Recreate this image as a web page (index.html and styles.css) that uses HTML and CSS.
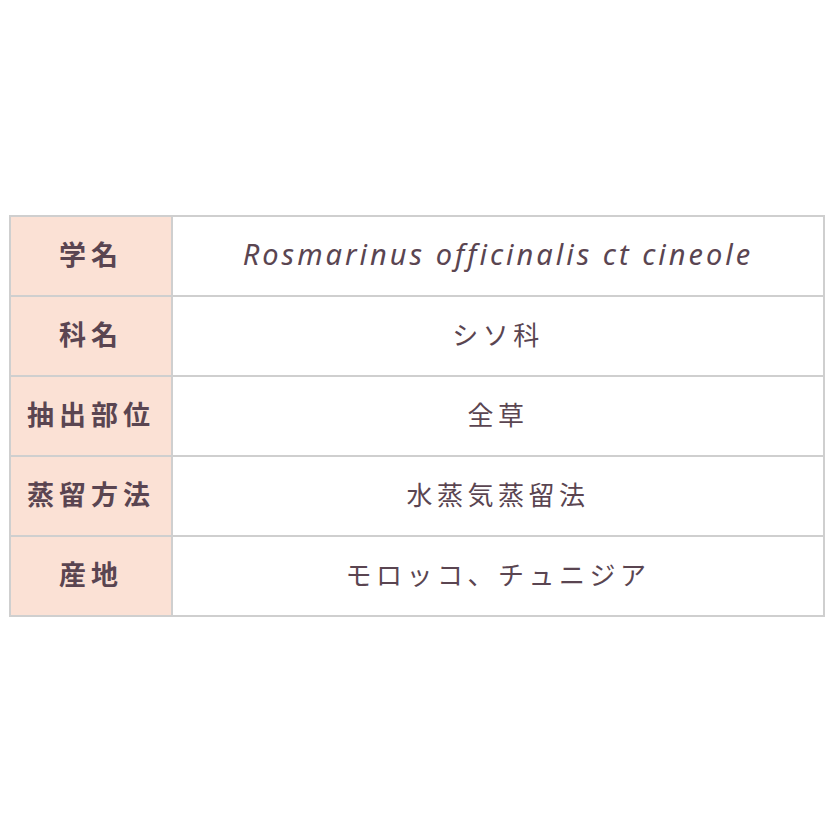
FILE: index.html
```html
<!DOCTYPE html>
<html lang="ja">
<head>
<meta charset="utf-8">
<link rel="stylesheet" href="styles.css">
</head>
<body>
<div class="page">
<table class="spec">
  <tr><th>学名</th><td class="latin">Rosmarinus officinalis ct cineole</td></tr>
  <tr><th>科名</th><td>シソ科</td></tr>
  <tr><th>抽出部位</th><td>全草</td></tr>
  <tr><th>蒸留方法</th><td>水蒸気蒸留法</td></tr>
  <tr><th>産地</th><td>モロッコ、チュニジア</td></tr>
</table>
</div>
</body>
</html>
```
FILE: styles.css
```css
html, body {
  margin: 0;
  padding: 0;
  background: #ffffff;
}
.page {
  width: 834px;
  height: 834px;
  display: flex;
  align-items: center;
  justify-content: center;
  box-sizing: border-box;
  padding: 0 8px 2px 8px;
}
.spec {
  width: 816px;
  border-collapse: collapse;
  font-family: "Noto Sans CJK JP", "Noto Sans", sans-serif;
  color: #5a4551;
  font-size: 26px;
  letter-spacing: 4.5px;
}
.spec th, .spec td {
  border: 2px solid #cfcfcf;
  height: 80px;
  padding: 0 0 5px 0;
  text-align: center;
  vertical-align: middle;
  box-sizing: border-box;
}
.spec th {
  width: 162px;
  background: #fbe1d5;
  font-weight: 700;
  font-size: 27px;
  letter-spacing: 5px;
}
.spec td {
  font-weight: 400;
}
.spec td.latin {
  font-family: "Noto Sans", sans-serif;
  font-style: italic;
  font-size: 29px;
  letter-spacing: 3px;
}
```
